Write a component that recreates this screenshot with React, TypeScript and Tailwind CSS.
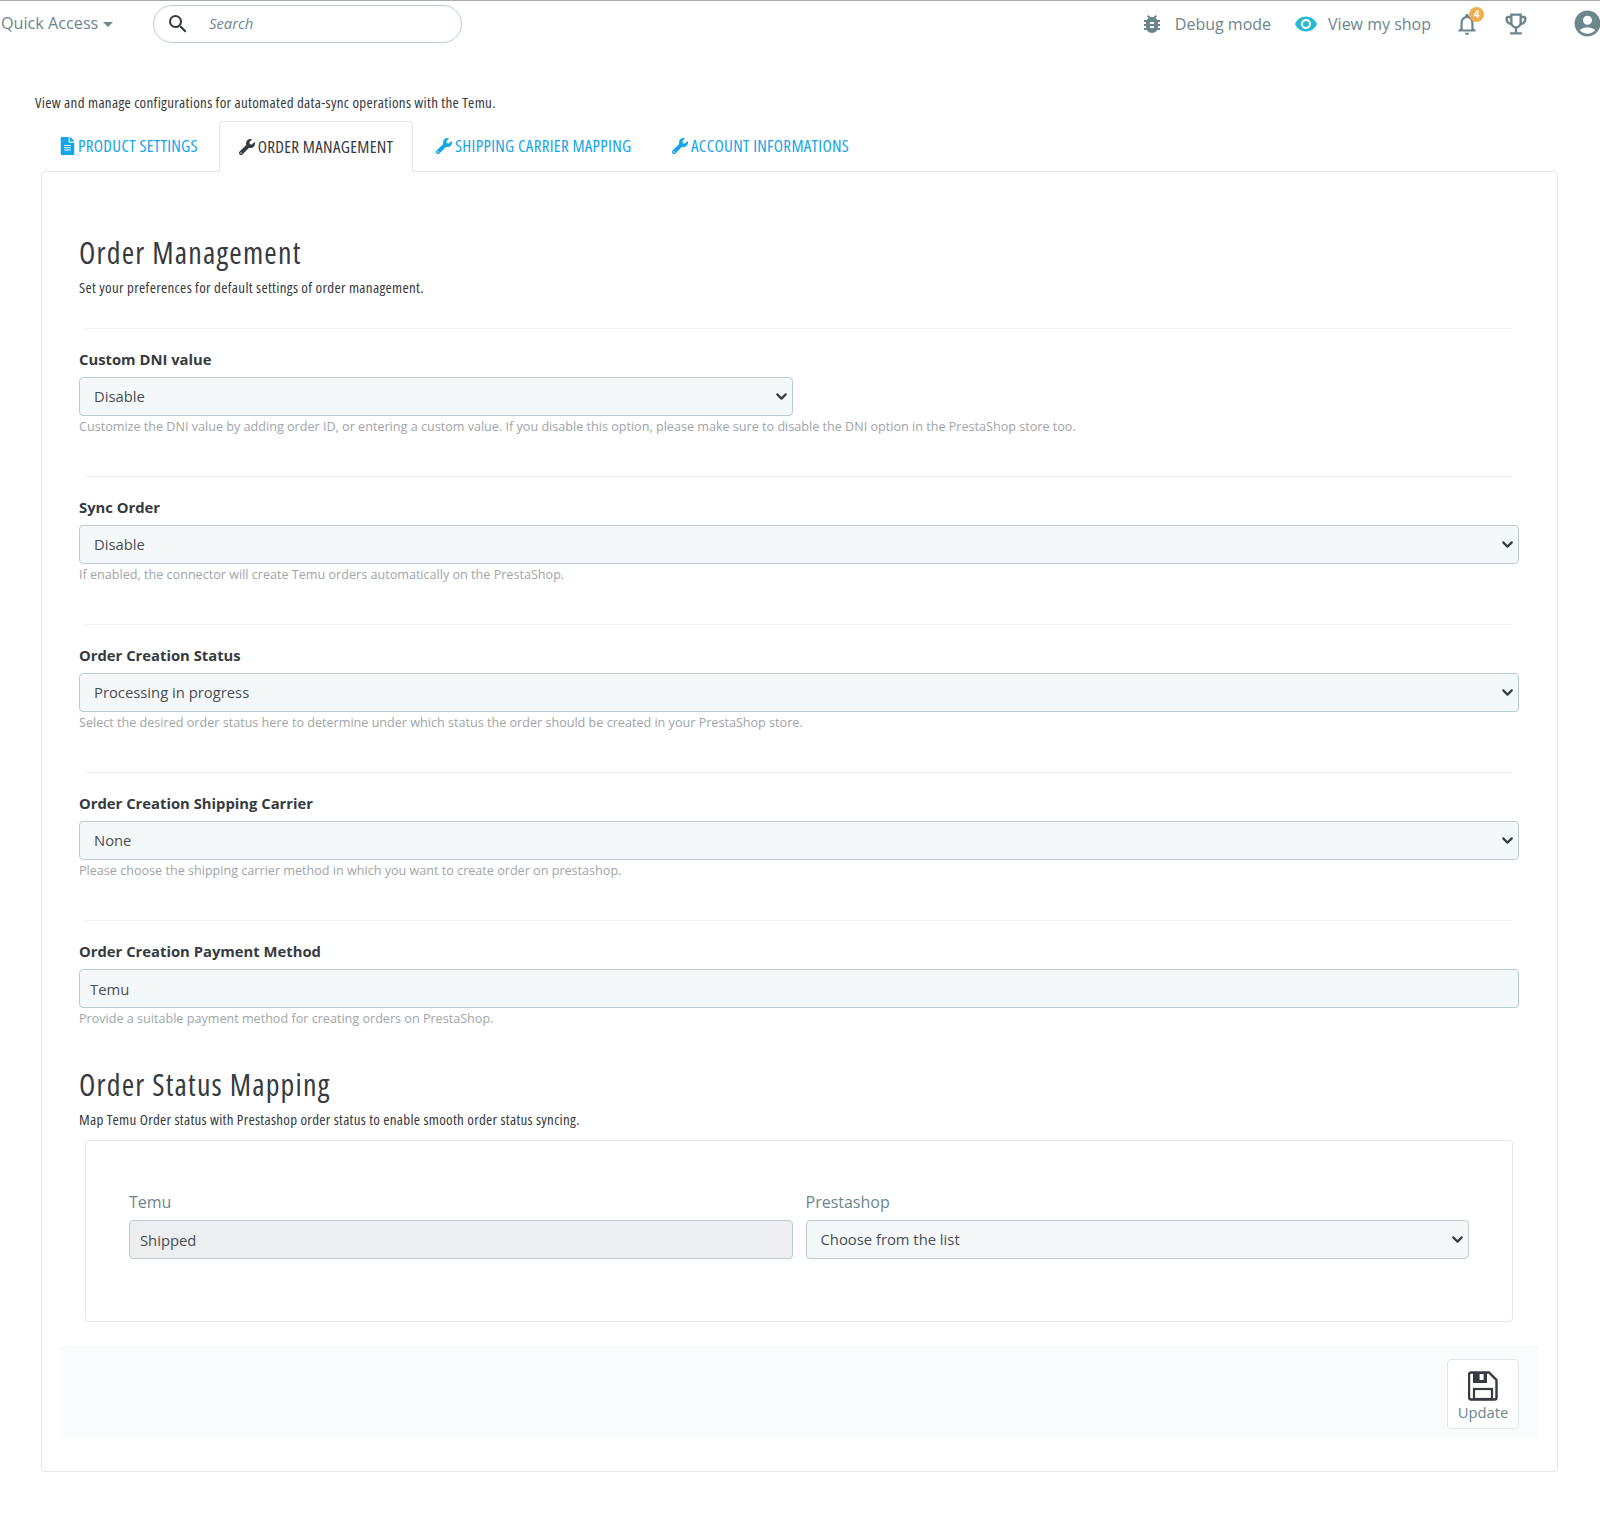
import React from "react";
import { ChevronDown } from "lucide-react";
import { FaFileAlt, FaWrench } from "react-icons/fa";
import {
  MdAccountCircle,
  MdBugReport,
  MdOutlineEmojiEvents,
  MdOutlineNotifications,
  MdSearch,
  MdVisibility,
} from "react-icons/md";

const narrow = "font-stretch-[75%] whitespace-nowrap";

const controlClass =
  "block h-[39px] w-full rounded border border-[#bbcdd2] bg-[#f5f8f9] text-[14.8px] text-[#494d55]";

const SelectBox: React.FC<{ value?: string }> = ({ value }) => (
  <div className="relative">
    <select className={`${controlClass} appearance-none pl-[14px] pr-[24px]`} defaultValue={value}>
      <option>{value}</option>
    </select>
    <ChevronDown
      strokeWidth={3}
      className="pointer-events-none absolute right-[3px] top-[11px] h-[17px] w-[17px] text-[#363a41]"
    />
  </div>
);

const Field: React.FC<{
  label: string;
  help: string;
  value?: string;
  input?: boolean;
  widthClass?: string;
}> = ({ label, help, value, input, widthClass }) => (
  <div className="h-[147px] pt-[21px]">
    <label className="block h-[27px] text-[14.8px] font-bold leading-[19px] text-[#363a41]">
      {label}
    </label>
    <div className={widthClass ?? "w-[1440px]"}>
      {input ? (
        <input readOnly value={value} className={`${controlClass} px-[10px]`} />
      ) : (
        <SelectBox value={value} />
      )}
    </div>
    <p className="mt-[2px] text-[12.6px] leading-[17px] text-[#a0a5a8]">{help}</p>
  </div>
);

const Divider = () => <div className="mx-[6px] h-px bg-[#eef0f1]" />;

const Tab: React.FC<{ icon: React.ReactNode; label: string; active?: boolean; className: string }> = ({
  icon,
  label,
  active,
  className,
}) => (
  <div
    className={`flex h-[51px] items-center gap-[3px] text-[17px] tracking-[0.3px] ${narrow} ${className} ${
      active
        ? "relative z-10 -mb-px rounded-t border border-b-0 border-[#e4e7e9] bg-white text-[#363a41]"
        : "text-[#12a5ea]"
    }`}
  >
    {icon}
    <span>{label}</span>
  </div>
);

const SaveIcon = () => (
  <svg viewBox="0 0 30 30" className="h-[30px] w-[30px] text-[#363a41]" fill="none">
    <path
      d="M3 1.5H21L28.5 9V26.5a2 2 0 0 1-2 2H3a2 2 0 0 1-2-2V3.5a2 2 0 0 1 2-2z"
      stroke="currentColor"
      strokeWidth="2.4"
    />
    <path d="M5 1h14v11H5zM11.6 3v6h4V3z" fill="currentColor" fillRule="evenodd" />
    <rect x="6" y="18" width="18" height="10" stroke="currentColor" strokeWidth="2.2" />
  </svg>
);

export default function App() {
  return (
    <div className="min-h-[1540px] bg-white font-['Open_Sans',sans-serif] text-[#363a41]">
      {/* Top bar */}
      <header className="flex h-[50px] items-center border-t border-[#aaaaaa] pb-[4px]">
        <div className="ml-px flex w-[152px] items-center text-[16.2px] text-[#6c868e]">
          Quick Access
          <span className="ml-[5px] mt-[3px] h-0 w-0 border-x-[5px] border-t-[5px] border-x-transparent border-t-[#6c868e]" />
        </div>
        <div className="flex h-[38px] w-[309px] items-center rounded-full border border-[#bbcdd2] pl-[12px]">
          <MdSearch className="h-[24px] w-[24px] text-[#363a41]" />
          <span className="ml-[19px] text-[14.8px] italic text-[#6c868e]">Search</span>
        </div>
        <div className="ml-auto flex items-center text-[16px] text-[#6c868e]">
          <MdBugReport className="h-[24px] w-[24px] text-[#6c868e]" />
          <span className="ml-[11px]">Debug mode</span>
          <MdVisibility className="ml-[23px] h-[24px] w-[24px] text-[#25b9d7]" />
          <span className="ml-[10px]">View my shop</span>
          <div className="relative ml-[23px]">
            <MdOutlineNotifications className="h-[26px] w-[26px] text-[#6c868e]" />
            <span className="absolute -right-[4px] -top-[4px] flex h-[15px] w-[15px] items-center justify-center rounded-full bg-[#f0ad4e] text-[10px] font-bold leading-none text-white">
              4
            </span>
          </div>
          <MdOutlineEmojiEvents className="ml-[22px] h-[28px] w-[28px] text-[#6c868e]" />
          <MdAccountCircle className="ml-[42px] mr-[-3px] h-[31px] w-[31px] text-[#6c868e]" />
        </div>
      </header>

      <p className={`ml-[35px] mt-[43px] text-[15px] leading-[18px] tracking-[0.32px] ${narrow}`}>
        View and manage configurations for automated data-sync operations with the Temu.
      </p>

      {/* Tabs */}
      <div className="ml-[41px] mt-[9px] flex items-end">
        <Tab
          className="ml-[19px] w-[159px]"
          icon={<FaFileAlt className="h-[18px] w-[15px]" />}
          label="PRODUCT SETTINGS"
        />
        <Tab
          active
          className="w-[194px] justify-center"
          icon={<FaWrench className="h-[16px] w-[16px]" />}
          label="ORDER MANAGEMENT"
        />
        <Tab
          className="ml-[23px] w-[236px]"
          icon={<FaWrench className="h-[16px] w-[16px]" />}
          label="SHIPPING CARRIER MAPPING"
        />
        <Tab
          className=""
          icon={<FaWrench className="h-[16px] w-[16px]" />}
          label="ACCOUNT INFORMATIONS"
        />
      </div>

      {/* Panel */}
      <main className="ml-[41px] h-[1301px] w-[1517px] rounded border border-[#e4e7e9] bg-white pt-[59px]">
        <div className="ml-[37px] w-[1440px]">
          <h2 className={`h-[44px] text-[30px] leading-[44px] tracking-[1.2px] ${narrow}`}>Order Management</h2>
          <p className={`mt-[2px] text-[15px] leading-[20px] tracking-[0.33px] ${narrow}`}>
            Set your preferences for default settings of order management.
          </p>
          <div className="h-[31px]" />
          <Divider />
          <Field
            label="Custom DNI value"
            value="Disable"
            widthClass="w-[714px]"
            help="Customize the DNI value by adding order ID, or entering a custom value. If you disable this option, please make sure to disable the DNI option in the PrestaShop store too."
          />
          <Divider />
          <Field
            label="Sync Order"
            value="Disable"
            help="If enabled, the connector will create Temu orders automatically on the PrestaShop."
          />
          <Divider />
          <Field
            label="Order Creation Status"
            value="Processing in progress"
            help="Select the desired order status here to determine under which status the order should be created in your PrestaShop store."
          />
          <Divider />
          <Field
            label="Order Creation Shipping Carrier"
            value="None"
            help="Please choose the shipping carrier method in which you want to create order on prestashop."
          />
          <Divider />
          <Field
            input
            label="Order Creation Payment Method"
            value="Temu"
            help="Provide a suitable payment method for creating orders on PrestaShop."
          />

          <h2 className={`-mt-[5px] h-[44px] text-[30px] leading-[44px] tracking-[1.2px] ${narrow}`}>
            Order Status Mapping
          </h2>
          <p className={`mt-[2px] text-[15px] leading-[20px] tracking-[0.3px] ${narrow}`}>
            Map Temu Order status with Prestashop order status to enable smooth order status syncing.
          </p>

          {/* Mapping box */}
          <div className="ml-[6px] mt-[11px] grid h-[182px] w-[1428px] grid-cols-2 gap-x-[13px] rounded border border-[#e4e7e9] px-[43px] pt-[50px]">
            <div>
              <label className="mb-[7px] block text-[16px] leading-[22px] text-[#6c868e]">Temu</label>
              <input
                readOnly
                value="Shipped"
                className="block h-[39px] w-full rounded border border-[#bbcdd2] bg-[#eceeef] px-[10px] text-[14.8px] text-[#494d55]"
              />
            </div>
            <div>
              <label className="mb-[7px] block text-[16px] leading-[22px] text-[#6c868e]">Prestashop</label>
              <SelectBox value="Choose from the list" />
            </div>
          </div>
        </div>

        {/* Footer */}
        <div className="ml-[18px] mt-[25px] flex h-[91px] w-[1478px] items-start justify-end border-t border-[#f2f4f5] bg-[#fafbfc] pr-[19px] pt-[11px]">
          <button className="flex h-[70px] w-[72px] flex-col items-center rounded border border-[#e4e7e9] bg-white pt-[11px] text-[14.8px] leading-[19px] text-[#6c868e]">
            <SaveIcon />
            <span className="mt-[2px]">Update</span>
          </button>
        </div>
      </main>
    </div>
  );
}
